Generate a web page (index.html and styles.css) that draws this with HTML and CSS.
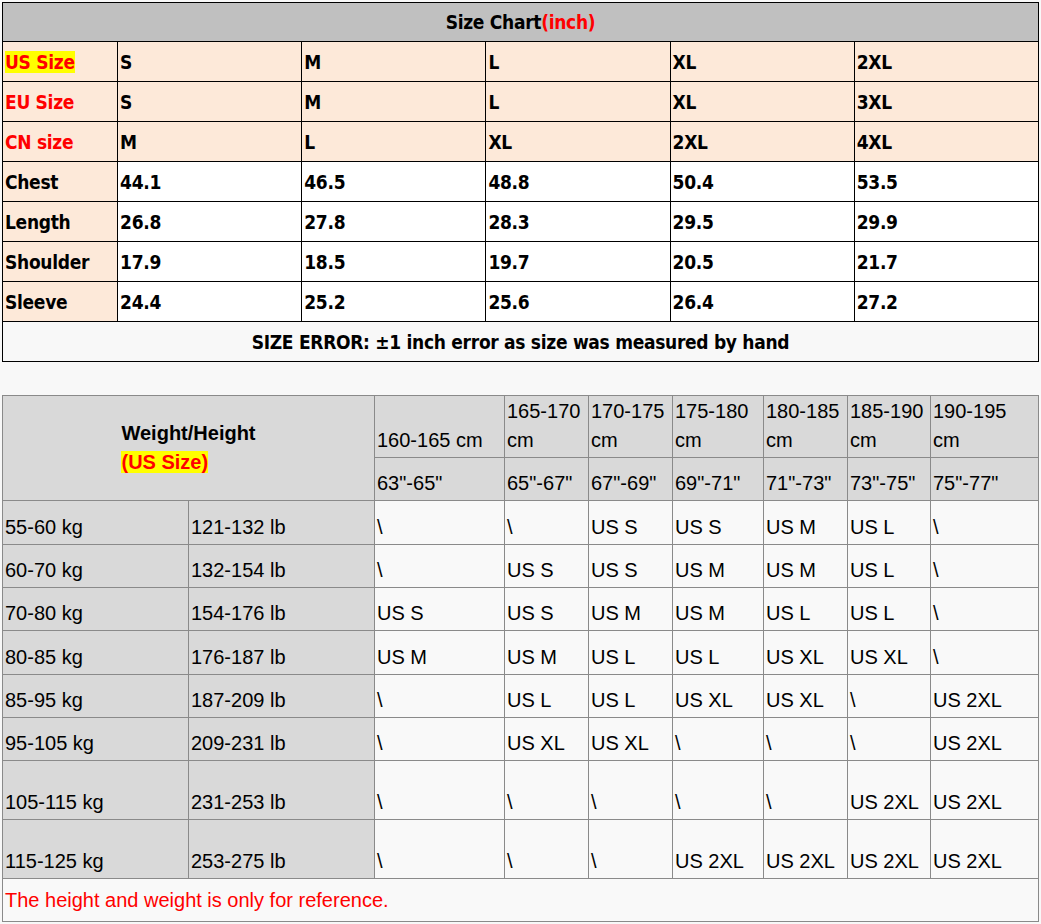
FILE: index.html
```html
<!DOCTYPE html>
<html>
<head>
<meta charset="utf-8">
<link rel="stylesheet" href="styles.css">
</head>
<body>
<div class="page">
  <table class="chart">
    <colgroup>
      <col class="c-label"><col class="c-val"><col class="c-val"><col class="c-val"><col class="c-val"><col class="c-val">
    </colgroup>
    <tr class="title-row"><td colspan="6" class="title">Size Chart<span class="red">(inch)</span></td></tr>
    <tr class="peach"><td class="lab"><span class="red hl">US Size</span></td><td>S</td><td>M</td><td>L</td><td>XL</td><td>2XL</td></tr>
    <tr class="peach"><td class="lab red">EU Size</td><td>S</td><td>M</td><td>L</td><td>XL</td><td>3XL</td></tr>
    <tr class="peach"><td class="lab red">CN size</td><td>M</td><td>L</td><td>XL</td><td>2XL</td><td>4XL</td></tr>
    <tr class="white"><td class="lab">Chest</td><td>44.1</td><td>46.5</td><td>48.8</td><td>50.4</td><td>53.5</td></tr>
    <tr class="white"><td class="lab">Length</td><td>26.8</td><td>27.8</td><td>28.3</td><td>29.5</td><td>29.9</td></tr>
    <tr class="white"><td class="lab">Shoulder</td><td>17.9</td><td>18.5</td><td>19.7</td><td>20.5</td><td>21.7</td></tr>
    <tr class="white"><td class="lab">Sleeve</td><td>24.4</td><td>25.2</td><td>25.6</td><td>26.4</td><td>27.2</td></tr>
    <tr><td colspan="6" class="note">SIZE ERROR: ±1 inch error as size was measured by hand</td></tr>
  </table>

  <table class="wh">
    <colgroup>
      <col class="w186"><col class="w186"><col class="w130"><col class="w84"><col class="w84"><col class="w91"><col class="w84"><col class="w83"><col class="w108">
    </colgroup>
    <tr class="h1">
      <th colspan="2" rowspan="2" class="corner"><div class="corner-box"><b>Weight/Height</b><br><b class="red hl">(US Size)</b></div></th>
      <th>160-165 cm</th><th>165-170 cm</th><th>170-175 cm</th><th>175-180 cm</th><th>180-185 cm</th><th>185-190 cm</th><th>190-195 cm</th>
    </tr>
    <tr class="h2">
      <th>63"-65"</th><th>65"-67"</th><th>67"-69"</th><th>69"-71"</th><th>71"-73"</th><th>73"-75"</th><th>75"-77"</th>
    </tr>
    <tr class="r44"><td class="g">55-60 kg</td><td class="g">121-132 lb</td><td>\</td><td>\</td><td>US S</td><td>US S</td><td>US M</td><td>US L</td><td>\</td></tr>
    <tr class="r43"><td class="g">60-70 kg</td><td class="g">132-154 lb</td><td>\</td><td>US S</td><td>US S</td><td>US M</td><td>US M</td><td>US L</td><td>\</td></tr>
    <tr class="r43"><td class="g">70-80 kg</td><td class="g">154-176 lb</td><td>US S</td><td>US S</td><td>US M</td><td>US M</td><td>US L</td><td>US L</td><td>\</td></tr>
    <tr class="r44"><td class="g">80-85 kg</td><td class="g">176-187 lb</td><td>US M</td><td>US M</td><td>US L</td><td>US L</td><td>US XL</td><td>US XL</td><td>\</td></tr>
    <tr class="r43"><td class="g">85-95 kg</td><td class="g">187-209 lb</td><td>\</td><td>US L</td><td>US L</td><td>US XL</td><td>US XL</td><td>\</td><td>US 2XL</td></tr>
    <tr class="r43"><td class="g">95-105 kg</td><td class="g">209-231 lb</td><td>\</td><td>US XL</td><td>US XL</td><td>\</td><td>\</td><td>\</td><td>US 2XL</td></tr>
    <tr class="r59"><td class="g">105-115 kg</td><td class="g">231-253 lb</td><td>\</td><td>\</td><td>\</td><td>\</td><td>\</td><td>US 2XL</td><td>US 2XL</td></tr>
    <tr class="r59"><td class="g">115-125 kg</td><td class="g">253-275 lb</td><td>\</td><td>\</td><td>\</td><td>US 2XL</td><td>US 2XL</td><td>US 2XL</td><td>US 2XL</td></tr>
    <tr class="r43"><td colspan="9" class="foot">The height and weight is only for reference.</td></tr>
  </table>
</div>
</body>
</html>
```

FILE: styles.css
```css
html, body {
  margin: 0;
  padding: 0;
  background: #f8f8f8;
}
.page {
  padding: 2px 0 0 2px;
}
.red { color: #ff0000; }
.hl { background: #ffff00; }

/* ---- size chart ---- */
.chart {
  border-collapse: collapse;
  table-layout: fixed;
  width: 1037px;
  font-family: "DejaVu Sans Condensed", "DejaVu Sans", sans-serif;
  font-weight: bold;
  font-size: 19px;
  letter-spacing: -0.3px;
  color: #000;
}
.chart col.c-label { width: 115px; }
.chart col.c-val { width: 184px; }
.chart td {
  border: 1px solid #000;
  height: 40px;
  padding: 0 2px;
  box-sizing: border-box;
  vertical-align: middle;
  white-space: nowrap;
}
.chart .title-row td { background: #c0c0c0; text-align: center; height: 39px; }
.chart .peach td { background: #fde9d9; }
.chart .white td { background: #ffffff; }
.chart .white td.lab { background: #fde9d9; }
.chart .note { text-align: center; }

/* ---- weight / height table ---- */
.wh {
  margin-top: 33px;
  border-collapse: collapse;
  table-layout: fixed;
  width: 1037px;
  font-family: "Liberation Sans", Arial, sans-serif;
  font-size: 20px;
  line-height: 29px;
  color: #000;
}
.wh col.w186 { width: 186px; }
.wh col.w130 { width: 130px; }
.wh col.w84 { width: 84px; }
.wh col.w91 { width: 91px; }
.wh col.w83 { width: 83px; }
.wh col.w108 { width: 108px; }
.wh th, .wh td {
  border: 1px solid #8a8a8a;
  padding: 0 2px 2px 2px;
  text-align: left;
  vertical-align: bottom;
  font-weight: normal;
  background: #f9f9f9;
}
.wh th { background: #d9d9d9; }
.wh td.g { background: #d9d9d9; }
.wh .h1 { height: 62px; }
.wh .h2 { height: 43px; }
.wh .r43 { height: 43px; }
.wh .r44 { height: 44px; }
.wh .r59 { height: 59px; }
.wh th.corner {
  text-align: center;
  vertical-align: middle;
  padding: 0;
}
.corner-box {
  display: inline-block;
  text-align: left;
}
.corner-box b { font-weight: bold; }
.wh td.foot {
  color: #ff0000;
  vertical-align: middle;
  padding-top: 2px;
}
```
